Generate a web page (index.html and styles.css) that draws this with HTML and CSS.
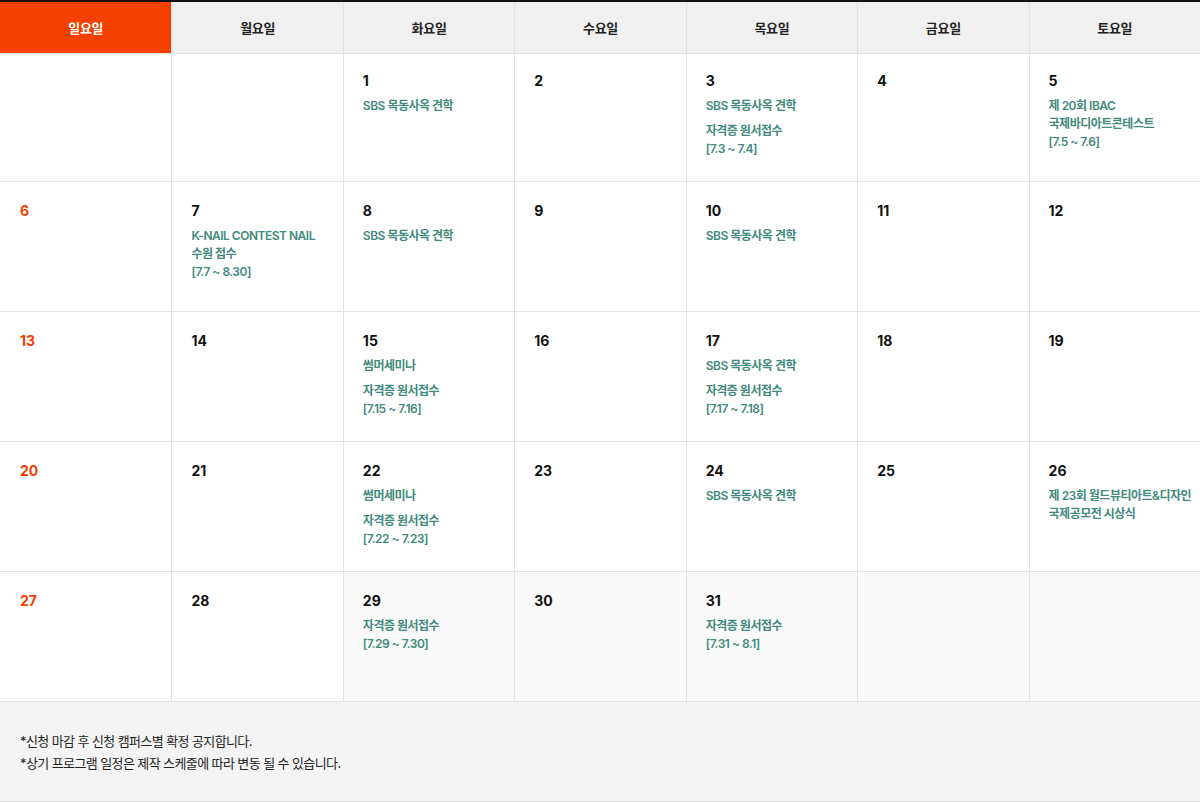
FILE: index.html
```html
<!DOCTYPE html>
<html lang="ko">
<head>
  <meta charset="UTF-8">
  <meta name="viewport" content="width=device-width, initial-scale=1.0">
  <title>7월 일정</title>
  <link rel="stylesheet" href="styles.css">
</head>
<body>
  <div class="calendar">
    <div class="week-head">
      <div class="day-name sun">일요일</div>
      <div class="day-name">월요일</div>
      <div class="day-name">화요일</div>
      <div class="day-name">수요일</div>
      <div class="day-name">목요일</div>
      <div class="day-name">금요일</div>
      <div class="day-name">토요일</div>
    </div>

    <div class="week first">
      <div class="cell"></div>
      <div class="cell"></div>
      <div class="cell"><span class="num">1</span><p class="event">SBS 목동사옥 견학</p></div>
      <div class="cell"><span class="num">2</span></div>
      <div class="cell"><span class="num">3</span><p class="event">SBS 목동사옥 견학</p><p class="event">자격증 원서접수<br>[7.3 ~ 7.4]</p></div>
      <div class="cell"><span class="num">4</span></div>
      <div class="cell"><span class="num">5</span><p class="event">제 20회 IBAC<br>국제바디아트콘테스트<br>[7.5 ~ 7.6]</p></div>
    </div>

    <div class="week">
      <div class="cell"><span class="num sun">6</span></div>
      <div class="cell"><span class="num">7</span><p class="event">K-NAIL CONTEST NAIL<br>수원 접수<br>[7.7 ~ 8.30]</p></div>
      <div class="cell"><span class="num">8</span><p class="event">SBS 목동사옥 견학</p></div>
      <div class="cell"><span class="num">9</span></div>
      <div class="cell"><span class="num">10</span><p class="event">SBS 목동사옥 견학</p></div>
      <div class="cell"><span class="num">11</span></div>
      <div class="cell"><span class="num">12</span></div>
    </div>

    <div class="week">
      <div class="cell"><span class="num sun">13</span></div>
      <div class="cell"><span class="num">14</span></div>
      <div class="cell"><span class="num">15</span><p class="event">썸머세미나</p><p class="event">자격증 원서접수<br>[7.15 ~ 7.16]</p></div>
      <div class="cell"><span class="num">16</span></div>
      <div class="cell"><span class="num">17</span><p class="event">SBS 목동사옥 견학</p><p class="event">자격증 원서접수<br>[7.17 ~ 7.18]</p></div>
      <div class="cell"><span class="num">18</span></div>
      <div class="cell"><span class="num">19</span></div>
    </div>

    <div class="week">
      <div class="cell"><span class="num sun">20</span></div>
      <div class="cell"><span class="num">21</span></div>
      <div class="cell"><span class="num">22</span><p class="event">썸머세미나</p><p class="event">자격증 원서접수<br>[7.22 ~ 7.23]</p></div>
      <div class="cell"><span class="num">23</span></div>
      <div class="cell"><span class="num">24</span><p class="event">SBS 목동사옥 견학</p></div>
      <div class="cell"><span class="num">25</span></div>
      <div class="cell"><span class="num">26</span><p class="event">제 23회 월드뷰티아트&amp;디자인<br>국제공모전 시상식</p></div>
    </div>

    <div class="week">
      <div class="cell"><span class="num sun">27</span></div>
      <div class="cell"><span class="num">28</span></div>
      <div class="cell past"><span class="num">29</span><p class="event">자격증 원서접수<br>[7.29 ~ 7.30]</p></div>
      <div class="cell past"><span class="num">30</span></div>
      <div class="cell past"><span class="num">31</span><p class="event">자격증 원서접수<br>[7.31 ~ 8.1]</p></div>
      <div class="cell past"></div>
      <div class="cell past"></div>
    </div>

    <div class="notice">
      <p>*신청 마감 후 신청 캠퍼스별 확정 공지합니다.</p>
      <p>*상기 프로그램 일정은 제작 스케줄에 따라 변동 될 수 있습니다.</p>
    </div>
  </div>
</body>
</html>
```

FILE: styles.css
```css
body {
  margin: 0;
  padding: 0;
  background: #fff;
  font-family: Inter, "Noto Sans CJK KR", sans-serif;
  color: #111;
}

.calendar {
  width: 1200px;
  border-top: 2px solid #111;
}

/* header row */
.week-head {
  display: grid;
  grid-template-columns: repeat(7, minmax(0, 1fr));
  height: 52px;
  border-bottom: 1px solid #e2e2e2;
  box-sizing: border-box;
}

.day-name {
  display: flex;
  align-items: center;
  justify-content: center;
  background-color: #f0f0f0;
  border-left: 1px solid #e2e2e2;
  font-size: 13px;
  font-weight: 600;
  color: #222;
  letter-spacing: -0.3px;
}

.day-name:first-child {
  border-left: none;
}

.day-name.sun {
  background-color: #f54100;
  color: #fff;
}

/* weeks */
.week {
  display: grid;
  grid-template-columns: repeat(7, minmax(0, 1fr));
  height: 130px;
  border-bottom: 1px solid #e2e2e2;
  box-sizing: border-box;
}

.week.first {
  height: 128px;
}

.cell {
  min-width: 0;
  border-left: 1px solid #e2e2e2;
  padding: 19px 20px 0 19px;
  box-sizing: border-box;
  display: flex;
  flex-direction: column;
  align-items: flex-start;
}

.cell:first-child {
  border-left: none;
  padding-left: 20px;
}

.week.first .cell {
  padding-top: 17px;
}

.cell.past {
  background-color: #fafafa;
}

.num {
  font-size: 14px;
  line-height: 20px;
  font-weight: 700;
  color: #111;
  margin-bottom: 6px;
}

.num.sun {
  color: #f54100;
}

.event {
  margin: 0 0 7px;
  font-size: 12px;
  line-height: 18px;
  font-weight: 600;
  color: #3f8a7c;
  letter-spacing: -0.5px;
  white-space: nowrap;
}

/* notice box */
.notice {
  background-color: #f4f4f4;
  padding: 28px 20px 27px;
  border-bottom: 1px solid #e2e2e2;
}

.notice p {
  margin: 0;
  font-size: 13px;
  line-height: 22px;
  color: #222;
  letter-spacing: -0.6px;
}
```
